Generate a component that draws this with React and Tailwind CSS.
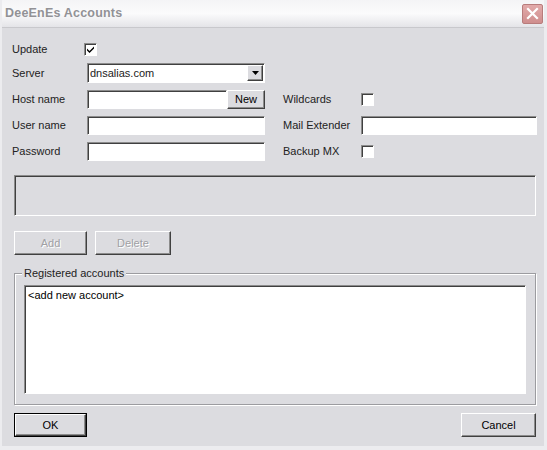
import React from 'react';

// sunken 3D field, like a classic Windows edit box
const sunken =
  'border-t border-l border-t-[#8c8c8c] border-l-[#8c8c8c] border-b border-r border-b-white border-r-white shadow-[inset_1px_1px_0_#404040]';
// raised 3D button
const raised =
  'bg-[#dcdce0] border-t border-l border-t-white border-l-white border-b border-r border-b-[#404040] border-r-[#404040] shadow-[inset_-1px_-1px_0_#8c8c8c]';

function CheckBox({ checked }) {
  return (
    <div className={`w-[13px] h-[13px] bg-white ${sunken} flex items-center justify-center`}>
      {checked && (
        <svg width="9" height="9" viewBox="0 0 9 9">
          <path d="M1 3.5 L3.5 6 L8 1.5 L8 3.5 L3.5 8 L1 5.5 Z" fill="#000" />
        </svg>
      )}
    </div>
  );
}

function Label({ children }) {
  return <div className="flex items-center h-full">{children}</div>;
}

function Button({ children, disabled, isDefault, className = '' }) {
  return (
    <div className={`${className} ${isDefault ? 'border border-black' : ''}`}>
      <div
        className={`${raised} h-full w-full flex items-center justify-center ${
          disabled ? 'text-[#a0a0a4] [text-shadow:1px_1px_0_#fff]' : 'text-black'
        }`}
      >
        {children}
      </div>
    </div>
  );
}

export default function App() {
  return (
    <div className="w-[547px] h-[450px] bg-[#dcdce0] flex flex-col font-['Liberation_Sans',Arial,sans-serif] text-[11px] text-[#222] border-l-[2px] border-r-[3px] border-b-[4px] border-[#ececef] overflow-hidden">
      {/* title bar */}
      <div className="h-[28px] shrink-0 flex items-center justify-between pl-[3px] pr-[1px] bg-gradient-to-b from-[#f4f4f6] via-[#fbfbfc] to-[#e4e4e8] border-b border-[#c8c8cc]">
        <span className="font-bold text-[12.5px] text-[#929296] tracking-[0.2px]">DeeEnEs Accounts</span>
        <div className="w-[21px] h-[20px] rounded-[2px] bg-gradient-to-b from-[#e2aaaa] to-[#cf8e8e] border border-[#b87c7c] flex items-center justify-center">
          <svg width="13" height="13" viewBox="0 0 13 13">
            <path d="M2 2 L11 11 M11 2 L2 11" stroke="#fff" strokeWidth="2.2" strokeLinecap="square" />
          </svg>
        </div>
      </div>

      <div className="flex-1 pl-[10px] pr-[7px] pt-[15px] flex flex-col">
        {/* form grid */}
        <div className="grid grid-cols-[75px_178px_18px_78px_176px] grid-rows-[13px_20px_19px_19px_19px] gap-y-[7px]">
          <Label>Update</Label>
          <div className="flex items-center -ml-[3px]">
            <CheckBox checked />
          </div>
          <div className="col-span-3" />

          <Label>Server</Label>
          <div className={`bg-white ${sunken} flex items-center justify-between pl-[2px] pr-[1px]`}>
            <span>dnsalias.com</span>
            <div className={`${raised} w-[16px] h-[16px] flex items-center justify-center`}>
              <svg width="7" height="4" viewBox="0 0 7 4">
                <path d="M0 0 H7 L3.5 4 Z" fill="#000" />
              </svg>
            </div>
          </div>
          <div className="col-span-3" />

          <Label>Host name</Label>
          <div className="flex">
            <div className={`flex-1 bg-white ${sunken}`} />
            <Button className="w-[38px] h-[19px]">New</Button>
          </div>
          <div />
          <Label>Wildcards</Label>
          <div className="flex items-center">
            <CheckBox />
          </div>

          <Label>User name</Label>
          <div className={`bg-white ${sunken}`} />
          <div />
          <Label>Mail Extender</Label>
          <div className={`bg-white ${sunken}`} />

          <Label>Password</Label>
          <div className={`bg-white ${sunken}`} />
          <div />
          <Label>Backup MX</Label>
          <div className="flex items-center">
            <CheckBox />
          </div>
        </div>

        {/* status box */}
        <div className={`mt-[14px] ml-[2px] mr-[1px] h-[41px] ${sunken}`} />

        {/* add / delete */}
        <div className="mt-[15px] ml-[2px] flex gap-[8px]">
          <Button disabled className="w-[73px] h-[24px]">Add</Button>
          <Button disabled className="w-[76px] h-[24px]">Delete</Button>
        </div>

        {/* registered accounts group */}
        <div className="relative mt-[18px] ml-[2px] mr-[1px] h-[132px] border border-[#9c9ca0] shadow-[inset_1px_1px_0_#fff,1px_1px_0_#fff] px-[9px] pt-[11px] pb-[10px]">
          <span className="absolute -top-[7px] left-[7px] px-[2px] bg-[#dcdce0] leading-[13px]">Registered accounts</span>
          <div className={`h-full bg-white ${sunken} pl-[3px] pt-[1px] text-black`}>&lt;add new account&gt;</div>
        </div>

        {/* ok / cancel */}
        <div className="mt-[8px] ml-[2px] mr-[1px] flex justify-between">
          <Button isDefault className="w-[73px] h-[24px]">OK</Button>
          <Button className="w-[75px] h-[24px]">Cancel</Button>
        </div>
      </div>
    </div>
  );
}
